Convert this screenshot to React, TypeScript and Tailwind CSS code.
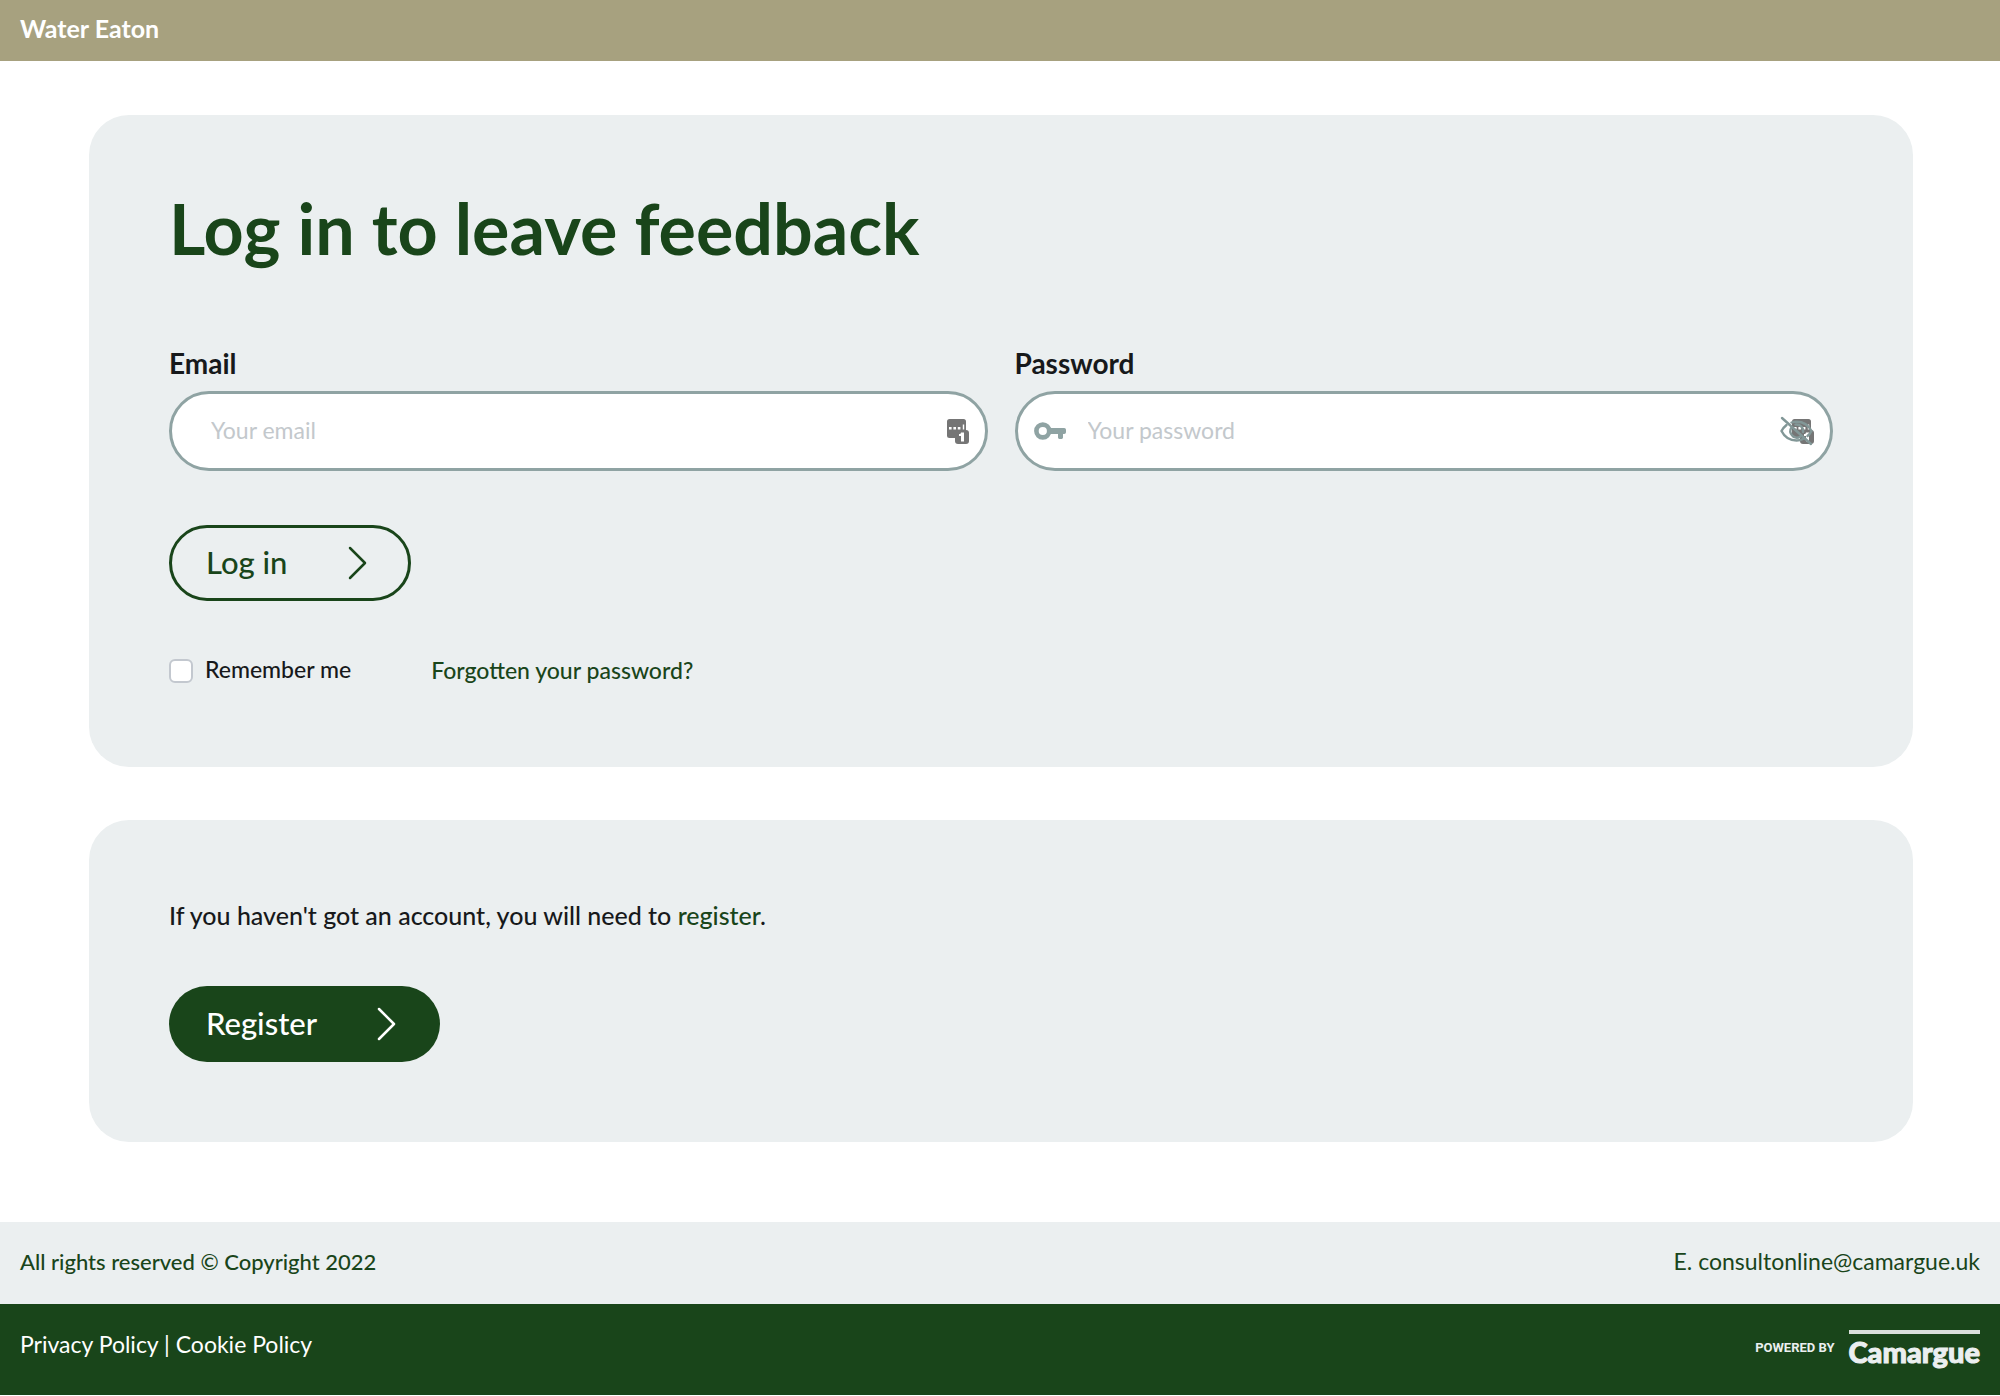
import React from "react";

type IconProps = {
  className?: string;
};

function ArrowIcon() {
  return (
    <svg
      width="20"
      height="34"
      viewBox="0 0 20 34"
      fill="none"
      stroke="currentColor"
      strokeWidth="2.5"
      strokeLinecap="round"
      strokeLinejoin="round"
      aria-hidden="true"
    >
      <path d="M2 2l15 15L2 32" />
    </svg>
  );
}

function KeyIcon() {
  return (
    <svg width="32" height="18" viewBox="0 0 32 18" aria-hidden="true">
      <circle cx="8.8" cy="9" r="6.4" fill="none" stroke="#8fa3a3" strokeWidth="4.6" />
      <path
        fill="#8fa3a3"
        d="M16 6h14.2a1.8 1.8 0 0 1 1.8 1.8v2.4a1.8 1.8 0 0 1-1.8 1.8H29v3.6a1.4 1.4 0 0 1-1.4 1.4h-2.2a1.4 1.4 0 0 1-1.4-1.4V12h-8z"
      />
    </svg>
  );
}

function VaultIcon({ className }: IconProps) {
  return (
    <svg
      className={className}
      width="22"
      height="25"
      viewBox="0 0 22 25"
      aria-hidden="true"
    >
      <rect x="0" y="0" width="19" height="19" rx="2.5" fill="#757575" />
      <path
        fill="#fff"
        d="M2 8h2.6v2.6H2zM6.4 8H9v2.6H6.4zM10.8 8h2.6v2.6h-2.6zM15.8 5.5h1.4v5.1h-1.4z"
      />
      <rect x="8" y="11" width="14" height="14" rx="3" fill="#757575" />
      <path fill="#fff" d="M14 13.5h3v9h-3V17h-2v-2c1.2 0 1.9-.5 2-1.5z" />
    </svg>
  );
}

function HiddenIcon({ className }: IconProps) {
  return (
    <svg
      className={className}
      width="34"
      height="30"
      viewBox="0 0 34 30"
      fill="none"
      stroke="#829797"
      strokeWidth="2.4"
      strokeLinecap="round"
      aria-hidden="true"
    >
      <path d="M6.5 9C4 11 2.5 13 1.5 15c3 6 8.5 9.5 15 9.5 2.5 0 5-.6 7-1.7" />
      <path d="M11.5 6.5c1.6-.6 3.2-.8 5-.8 6.5 0 12 3.3 15 9.3-1 2-2.3 3.7-4 5" />
      <path d="M11.5 11.5a6.5 6.5 0 0 0 9 9" />
      <path d="M15.5 8.6a6.5 6.5 0 0 1 7.5 7.4" />
      <path d="M2 2l29 26" />
    </svg>
  );
}

function Header() {
  return (
    <header className="flex h-[61px] items-center bg-[#a7a17f] px-5 pb-1">
      <p className="text-[25px] font-bold text-white">Water Eaton</p>
    </header>
  );
}

function LoginCard() {
  return (
    <section className="rounded-[40px] bg-[#ebeff0] px-20 pt-[73px] pb-20">
      <h1 className="text-[70px] leading-20 font-bold text-[#19451a]">
        Log in to leave feedback
      </h1>
      <form className="pt-[79px]" onSubmit={(e) => e.preventDefault()}>
        <div className="grid grid-cols-2 gap-x-[27px]">
          <div>
            <label htmlFor="email" className="block text-[28px] leading-8 font-bold">
              Email
            </label>
            <div className="mt-3 flex h-20 items-center rounded-full border-3 border-[#8fa3a3] bg-white pr-4 pl-[39px]">
              <input
                type="email"
                id="email"
                placeholder="Your email"
                className="min-w-0 flex-1 pb-0.5 text-[23px] outline-none placeholder:text-[#c3c8cc]"
              />
              <VaultIcon />
            </div>
          </div>
          <div>
            <label htmlFor="password" className="block text-[28px] leading-8 font-bold">
              Password
            </label>
            <div className="mt-3 flex h-20 items-center rounded-full border-3 border-[#8fa3a3] bg-white px-4">
              <KeyIcon />
              <input
                type="password"
                id="password"
                placeholder="Your password"
                className="ml-[22px] min-w-0 flex-1 pb-0.5 text-[23px] outline-none placeholder:text-[#c3c8cc]"
              />
              <button
                type="button"
                aria-label="Show password"
                className="relative h-[30px] w-[34px]"
              >
                <VaultIcon className="absolute top-[3px] right-0" />
                <HiddenIcon className="absolute top-0 left-0" />
              </button>
            </div>
          </div>
        </div>
        <button
          type="submit"
          className="mt-[54px] flex h-[76px] items-center gap-[61px] rounded-full border-3 border-[#19451a] pr-10 pl-[34px] text-[31px] font-medium text-[#19451a]"
        >
          <span className="pb-0.5">Log in</span>
          <ArrowIcon />
        </button>
        <div className="mt-[54px] flex h-8 items-center">
          <input
            type="checkbox"
            name="remember"
            id="remember"
            className="size-6 appearance-none rounded-md border-2 border-[#c3c8cf] bg-white"
          />
          <label htmlFor="remember" className="ml-3 pb-1 text-[23px] font-medium">
            Remember me
          </label>
          <a href="#" className="ml-20 pb-0.5 text-[23px] font-medium text-[#19451a]">
            Forgotten your password?
          </a>
        </div>
      </form>
    </section>
  );
}

function RegisterCard() {
  return (
    <section className="rounded-[40px] bg-[#ebeff0] p-20">
      <p className="text-[25px] leading-[30px] font-medium">
        If you haven't got an account, you will need to{" "}
        <a href="#" className="text-[#19451a]">
          register
        </a>
        .
      </p>
      <button
        type="button"
        className="mt-14 flex h-[76px] items-center gap-[60px] rounded-full bg-[#19451a] pr-[43px] pl-[37px] text-[31px] font-medium text-white"
      >
        <span className="pb-0.5">Register</span>
        <ArrowIcon />
      </button>
    </section>
  );
}

function Footer() {
  return (
    <footer className="mt-20 text-[23px]">
      <div className="flex h-[82px] items-center justify-between bg-[#ebeff0] px-5 pb-1 text-[#19451a]">
        <p className="text-[22px] font-medium">
          All rights reserved © Copyright 2022
        </p>
        <a href="#">E. consultonline@camargue.uk</a>
      </div>
      <div className="flex h-[91px] items-center justify-between bg-[#19451a] px-5 text-white">
        <p className="pb-2.5">
          <a href="#">Privacy Policy</a> | <a href="#">Cookie Policy</a>
        </p>
        <div className="flex items-center gap-[14px] text-[#ebeff0]">
          <span className="pb-1 font-[Roboto] text-[13px] font-bold">POWERED BY</span>
          <a
            href="#"
            className="border-t-4 border-[#d9e0dc] text-[29px] leading-9 font-black [-webkit-text-stroke:1px]"
          >
            Camargue
          </a>
        </div>
      </div>
    </footer>
  );
}

function App() {
  return (
    <div className="bg-white font-[Lato,sans-serif] text-[#17191b]">
      <Header />
      <main className="flex flex-col gap-[53px] pt-[54px] pr-[87px] pl-[89px]">
        <LoginCard />
        <RegisterCard />
      </main>
      <Footer />
    </div>
  );
}

export default App;
